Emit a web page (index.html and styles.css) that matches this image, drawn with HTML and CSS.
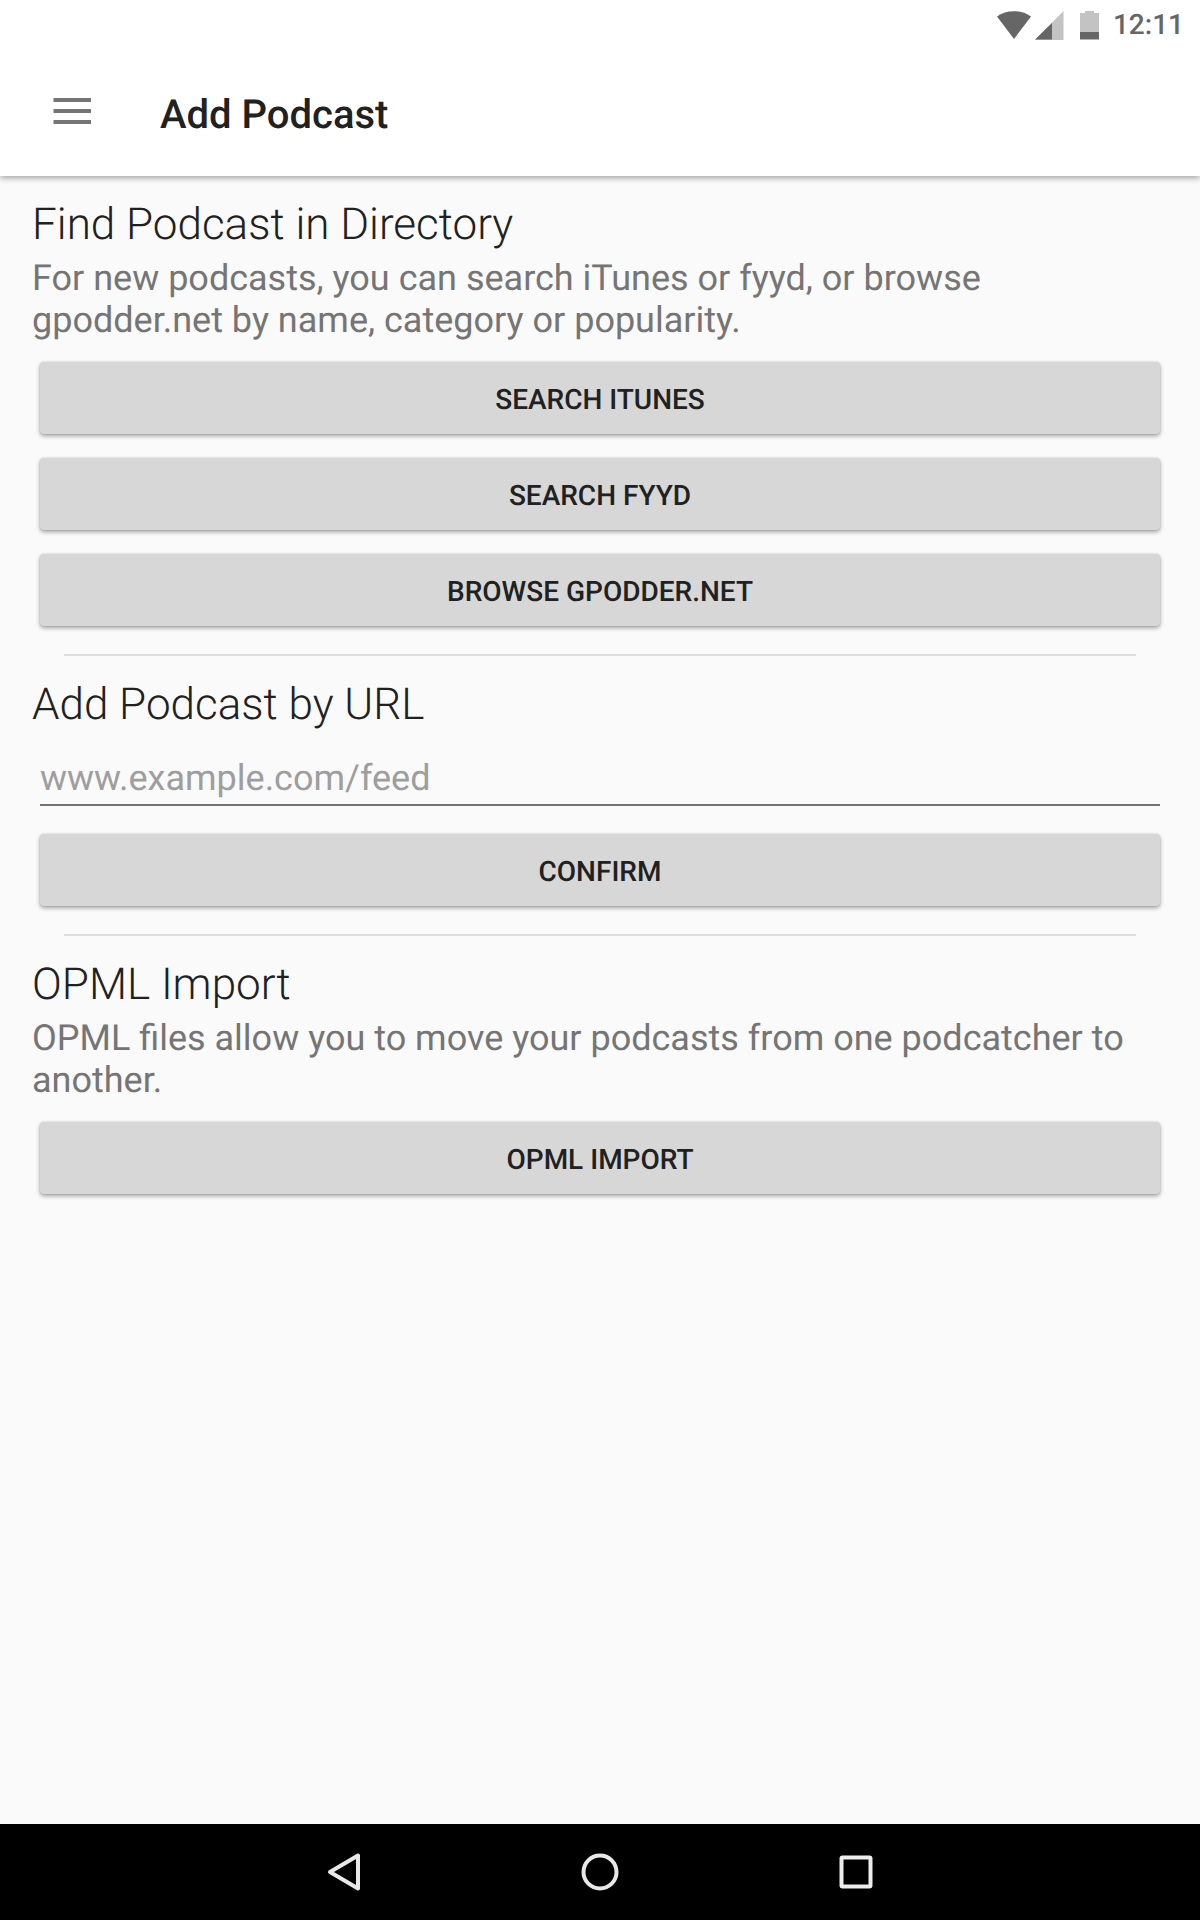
FILE: index.html
```html
<!DOCTYPE html>
<html lang="en">
<head>
<meta charset="utf-8">
<meta name="viewport" content="width=device-width, initial-scale=1">
<title>Add Podcast</title>
<link rel="stylesheet" href="styles.css">
</head>
<body>
<header class="top">
  <div class="status-bar">
    <svg class="status-icons" viewBox="0 0 104 30" aria-hidden="true">
      <path d="M0 6.500C9-.6 25-.6 34 6.500L17 29Z" fill="#666"/>
      <path d="M38 30 66.500 1V30Z" fill="#c3c3c3"/>
      <path d="M38 29.500 55 13V29.500Z" fill="#666"/>
      <path d="M83 3H88V1H97V3H102V29H83Z" fill="#c3c3c3"/>
      <path d="M83 22H102V29.500H83Z" fill="#666"/>
    </svg>
    <span class="clock">12:11</span>
  </div>
  <div class="app-bar">
    <button class="menu-button" type="button" aria-label="Open menu">
      <svg viewBox="0 0 38 26" width="38" height="26" aria-hidden="true">
        <path d="M.5 0H38V4H.5ZM.5 11H38V15H.5ZM.5 22H38V26H.5Z" fill="#757575"/>
      </svg>
    </button>
    <h1 class="title">Add Podcast</h1>
  </div>
</header>

<main class="content">
  <section class="section">
    <h2 class="heading">Find Podcast in Directory</h2>
    <p class="description">For new podcasts, you can search iTunes or fyyd, or browse gpodder.net by name, category or popularity.</p>
    <div class="actions">
      <button class="button" type="button">SEARCH ITUNES</button>
      <button class="button" type="button">SEARCH FYYD</button>
      <button class="button" type="button">BROWSE GPODDER.NET</button>
    </div>
  </section>
  <hr class="divider">
  <form class="section">
    <h2 class="heading"><label for="feed-url">Add Podcast by URL</label></h2>
    <input class="url-input" id="feed-url" type="text" placeholder="www.example.com/feed">
    <button class="button confirm" type="button">CONFIRM</button>
  </form>
  <hr class="divider">
  <section class="section">
    <h2 class="heading">OPML Import</h2>
    <p class="description">OPML files allow you to move your podcasts from one podcatcher to another.</p>
    <div class="actions">
      <button class="button" type="button">OPML IMPORT</button>
    </div>
  </section>
</main>

<nav class="nav-bar" aria-label="System">
  <button class="nav-button" type="button" aria-label="Back">
    <svg viewBox="0 0 40 40" width="40" height="40" aria-hidden="true">
      <path d="M6 20 34 3.500V36.500Z" fill="none" stroke="#e8e8e8" stroke-width="4" stroke-linejoin="round"/>
    </svg>
  </button>
  <button class="nav-button" type="button" aria-label="Home">
    <svg viewBox="0 0 40 40" width="40" height="40" aria-hidden="true">
      <circle cx="20" cy="20" r="16.500" fill="none" stroke="#e8e8e8" stroke-width="4"/>
    </svg>
  </button>
  <button class="nav-button" type="button" aria-label="Recent apps">
    <svg viewBox="0 0 40 40" width="40" height="40" aria-hidden="true">
      <rect x="5.500" y="5.500" width="29" height="29" rx="1" fill="none" stroke="#ededed" stroke-width="4" stroke-linejoin="round"/>
    </svg>
  </button>
</nav>
</body>
</html>
```

FILE: styles.css
```css
* {
  box-sizing: border-box;
}

body {
  margin: 0;
  min-height: 100vh;
  display: flex;
  flex-direction: column;
  background: #fafafa;
  color: #212121;
  font-family: Roboto, "Liberation Sans", sans-serif;
  text-rendering: geometricPrecision;
}

button,
input {
  font-family: inherit;
  text-rendering: inherit;
}

.top {
  background: #fff;
  box-shadow: 0 2px 6px rgba(0, 0, 0, 0.36);
}

.status-bar {
  display: flex;
  justify-content: flex-end;
  align-items: center;
  gap: 12px;
  height: 48px;
  padding: 2px 16px 0 0;
}

.status-icons {
  width: 104px;
  height: 30px;
}

.clock {
  color: #666;
  font-size: 28px;
  font-weight: 500;
  line-height: 32px;
}

.app-bar {
  display: flex;
  align-items: center;
  gap: 48px;
  height: 128px;
  padding: 0 32px;
}

.menu-button {
  display: flex;
  align-items: center;
  justify-content: center;
  width: 80px;
  height: 80px;
  padding: 0 0 2px;
  border: 0;
  background: none;
}

.title {
  margin: 0;
  padding-top: 6px;
  font-size: 40px;
  font-weight: 500;
  line-height: 48px;
}

.content {
  flex: 1;
  padding: 22px 32px;
}

.section {
  display: flex;
  flex-direction: column;
}

.heading {
  margin: 0;
  font-size: 44px;
  font-weight: 300;
  line-height: 52px;
}

.description {
  margin: 7px 0 0;
  color: #757575;
  font-size: 36px;
  line-height: 42px;
}

.actions {
  display: flex;
  flex-direction: column;
  gap: 24px;
  margin-top: 21px;
}

.button {
  height: 72px;
  margin: 0 8px;
  padding: 4px 16px 0;
  border: 0;
  border-radius: 4px;
  background: #d7d7d7;
  box-shadow: 0 2px 4px rgba(0, 0, 0, 0.36), 0 0 2px rgba(0, 0, 0, 0.12);
  color: #212121;
  font-size: 28px;
  font-weight: 500;
  line-height: 32px;
}

.divider {
  height: 2px;
  margin: 28px 32px 22px;
  border: 0;
  background: #dcdcdc;
}

.url-input {
  height: 76px;
  margin: 0 8px;
  padding: 27px 0 5px;
  border: 0;
  border-bottom: 2px solid #737373;
  border-radius: 0;
  background: transparent;
  color: #212121;
  font-size: 36px;
  line-height: 42px;
  outline: 0;
}

.url-input::placeholder {
  color: #9e9e9e;
  opacity: 1;
}

.confirm {
  margin-top: 28px;
}

.nav-bar {
  display: flex;
  justify-content: center;
  gap: 176px;
  height: 96px;
  background: #000;
}

.nav-button {
  display: flex;
  align-items: center;
  justify-content: center;
  width: 80px;
  padding: 0;
  border: 0;
  background: none;
}
```
